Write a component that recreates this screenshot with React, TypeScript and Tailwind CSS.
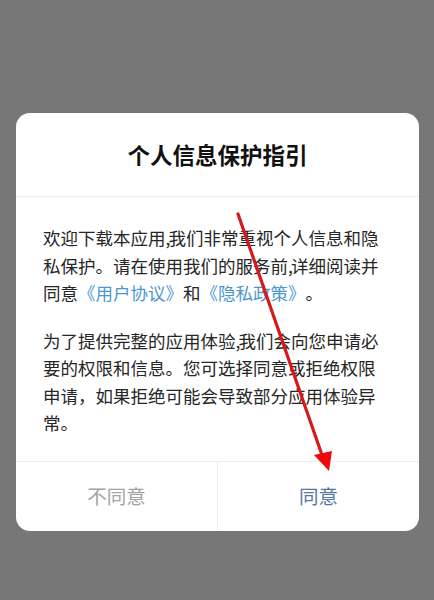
import React from 'react'

const font = { fontFamily: '"Noto Sans CJK SC", "Noto Sans", sans-serif' }

function Link({ children }: { children: React.ReactNode }) {
  return <span className="text-[#4b97cf]">{children}</span>
}

// narrow ascii comma, as the phone font draws it
function Comma() {
  return <span className="inline-block w-[3px]">,</span>
}

function Arrow() {
  return (
    <svg className="pointer-events-none absolute inset-0" width="434" height="600" viewBox="0 0 434 600">
      <line x1="238" y1="214" x2="322" y2="455" stroke="#d41a1a" strokeWidth="3.2" strokeLinecap="round" />
      <polygon points="314,455 332,451 329,471" fill="#ee0a0a" />
    </svg>
  )
}

export default function App() {
  return (
    <div className="relative h-[600px] w-[434px] overflow-hidden bg-[#777777] pt-[113px]" style={font}>
      <div className="mx-4 w-[403px] overflow-hidden rounded-[14px] bg-white">
        <div className="flex h-[84px] items-center justify-center border-b border-[#ececec]">
          <h1 className="text-[22.5px] font-bold text-[#111]">个人信息保护指引</h1>
        </div>

        <div className="px-[27px] pb-[24px] pt-[27px] text-[17.5px] leading-[27.5px] text-[#262626] [text-spacing-trim:space-all]">
          <p className="whitespace-nowrap">
            欢迎下载本应用<Comma />我们非常重视个人信息和隐
            <br />
            私保护。请在使用我们的服务前<Comma />详细阅读并
            <br />
            同意<Link>《用户协议》</Link>和<Link>《隐私政策》</Link>。
          </p>
          <p className="mt-[20px] whitespace-nowrap">
            为了提供完整的应用体验<Comma />我们会向您申请必
            <br />
            要的权限和信息。您可选择同意或拒绝权限
            <br />
            申请，如果拒绝可能会导致部分应用体验异
            <br />
            常。
          </p>
        </div>

        <div className="flex h-[70px] border-t border-[#ececec] text-[19.5px]">
          <button className="flex flex-1 items-center justify-center border-r border-[#ececec] text-[#a3a3a3]">
            不同意
          </button>
          <button className="flex flex-1 items-center justify-center text-[#5876a5]">同意</button>
        </div>
      </div>

      <Arrow />
    </div>
  )
}
